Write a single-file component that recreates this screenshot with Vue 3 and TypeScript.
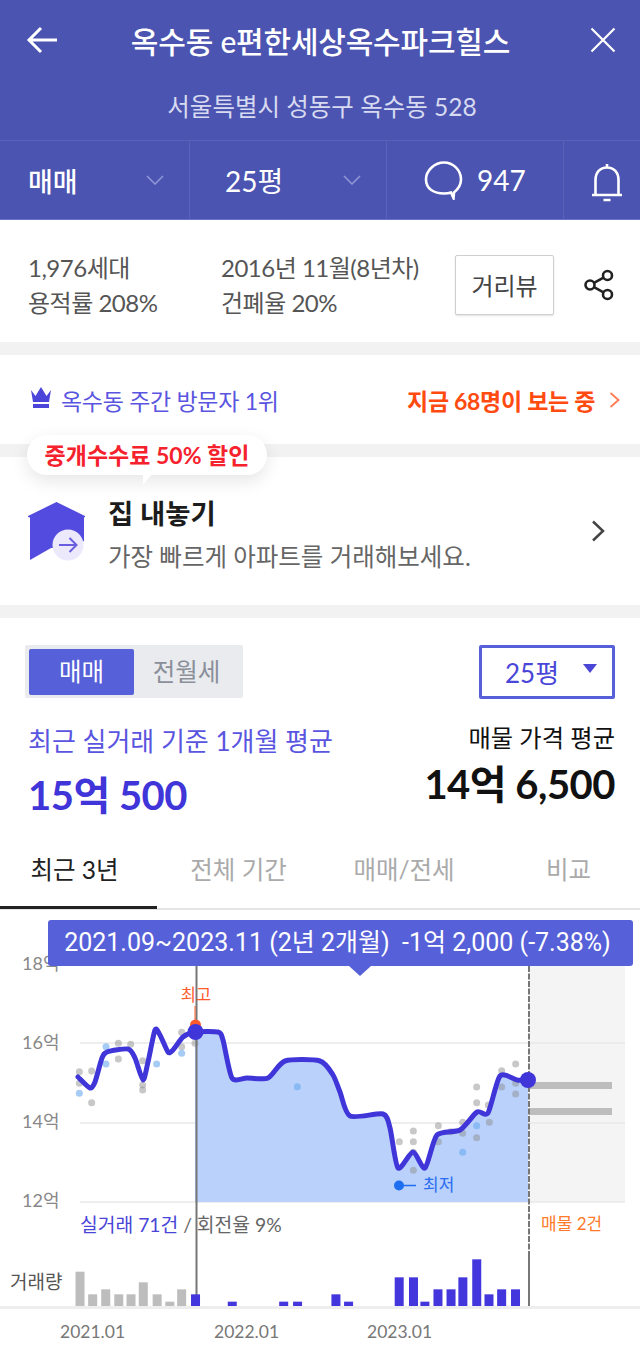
<template>
  <div class="page">
    <header class="head">
      <div class="title-row">
        <svg class="back" width="32" height="28" viewBox="0 0 32 28"><path d="M31 14H3M15 2 3 14l12 12" /></svg>
        <h1 class="title">옥수동 e편한세상옥수파크힐스</h1>
        <svg class="close" width="26" height="26" viewBox="0 0 26 26"><path d="M1.5 1.5l23 23M24.5 1.5l-23 23" /></svg>
      </div>
      <p class="addr">서울특별시 성동구 옥수동 528</p>
      <div class="filters">
        <div class="filter f-deal">
          <span>매매</span>
          <svg width="18" height="10" viewBox="0 0 18 10"><path d="M1 1l8 8 8-8" /></svg>
        </div>
        <div class="filter f-size">
          <span>25평</span>
          <svg width="18" height="10" viewBox="0 0 18 10"><path d="M1 1l8 8 8-8" /></svg>
        </div>
        <div class="filter f-talk">
          <svg width="40" height="40" viewBox="0 0 40 40" class="bubble">
            <path d="M30 32.5c4-3.300 7-7.500 7-13C37 10 29 2.500 20 2.500S2 10 2 19.500 10 33.500 20 33.500c3 0 5-.3 7-1l2.500 5.500z" />
          </svg>
          <span>947</span>
        </div>
        <div class="filter f-bell">
          <svg width="34" height="40" viewBox="0 0 34 40" class="bell">
            <path d="M2 33h30M5.500 33V18C5.500 10.500 10 5.500 17 5.500S28.500 10.500 28.500 18V33M17 2v3M13.500 38h7" />
          </svg>
        </div>
      </div>
    </header>

    <section class="info">
      <div class="info-col c1">
        <div>1,976세대</div>
        <div>용적률 208%</div>
      </div>
      <div class="info-col c2">
        <div>2016년 11월(8년차)</div>
        <div>건폐율 20%</div>
      </div>
      <button class="road">거리뷰</button>
      <svg class="share" width="30" height="32" viewBox="0 0 30 32">
        <circle cx="23.500" cy="6.500" r="4.500" />
        <circle cx="6" cy="16" r="4.500" />
        <circle cx="23.500" cy="25.500" r="4.500" />
        <path d="M10 13.800l9.500-5.200M10 18.200l9.500 5.200" />
      </svg>
    </section>

    <section class="rank band">
      <div class="rank-l">
        <svg class="crown" width="22" height="21" viewBox="0 0 22 21"><path d="M1 3l4.500 6L11 0l5.500 9L21 3l-2 12H3zM3 17h16v4H3z" /></svg>
        <span>옥수동 주간 방문자 1위</span>
      </div>
      <div class="rank-r">
        <span>지금 68명이 보는 중</span>
        <svg width="11" height="16" viewBox="0 0 11 16"><path d="M1.500 1l8 7-8 7" /></svg>
      </div>
    </section>

    <section class="sell band">
      <div class="badge">중개수수료 50% 할인</div>
      <svg class="house" width="58" height="60" viewBox="0 0 58 60">
        <path class="house-body" d="M28.500 1 0 15v1l2 .5V59L23 47h10l23-7V16.500l1-.5v-1z" />
        <circle class="house-disc" cx="40" cy="44" r="15.500" />
        <path class="house-arrow" d="M31 44h17M41.500 37l7 7-7 7" />
      </svg>
      <div class="sell-text">
        <strong>집 내놓기</strong>
        <span>가장 빠르게 아파트를 거래해보세요.</span>
      </div>
      <svg class="sell-arrow" width="14" height="22" viewBox="0 0 14 22"><path d="M2 1.500l10 9.500-10 9.500" /></svg>
    </section>

    <section class="price band">
      <div class="controls">
        <div class="toggle">
          <span class="on">매매</span>
          <span class="off">전월세</span>
        </div>
        <div class="select">
          <span>25평</span>
          <i class="tri"></i>
        </div>
      </div>
      <div class="summary">
        <div class="sum-l">
          <div class="cap">최근 실거래 기준 1개월 평균</div>
          <div class="amount">15억 500</div>
        </div>
        <div class="sum-r">
          <div class="cap">매물 가격 평균</div>
          <div class="amount">14억 6,500</div>
        </div>
      </div>
      <nav class="tabs">
        <span v-for="(t, i) in tabs" :key="t" class="tab" :class="{ active: i === 0 }">{{ t }}</span>
      </nav>
    </section>

    <section class="chart">
      <div class="tip">
        <span>2021.09~2023.11 (2년 2개월)&nbsp;&nbsp;-1억 2,000 (-7.38%)</span>
        <i class="tip-arrow"></i>
      </div>
      <svg width="640" height="437" viewBox="0 910 640 437">
        <rect x="529" y="966" width="96" height="236" fill="#f4f4f4" />
        <line v-for="y in gridYs" :key="y" x1="80" x2="625" :y1="y" :y2="y" class="grid" />
        <text v-for="l in yLabels" :key="l.t" x="22" :y="l.y" class="ylabel">{{ l.t }}</text>
        <path :d="areaPath" fill="#b9d1fb" />
        <circle v-for="(d, i) in greyDots" :key="'g' + i" :cx="d[0]" :cy="d[1]" r="3.500" fill="#8c8c8c" opacity=".48" />
        <circle v-for="(d, i) in blueDots" :key="'b' + i" :cx="d[0]" :cy="d[1]" r="3.500" fill="#6aaaf0" opacity=".6" />
        <rect x="529" y="1082" width="83" height="7" fill="#bdbdbd" />
        <rect x="529" y="1108" width="83" height="7" fill="#bdbdbd" />

        <line x1="196.500" x2="196.500" y1="966" y2="1307" class="vline" />
        <line x1="529" x2="529" y1="966" y2="1252" class="vline" stroke-dasharray="6 1.500" />
        <line x1="529" x2="529" y1="1252" y2="1307" class="vline" />

        <text x="196" y="1001" class="mark-hi" text-anchor="middle">최고</text>
        <line x1="195" x2="195" y1="1006" y2="1024" stroke="#ff5a2a" />
        <circle cx="195.500" cy="1025" r="5.500" fill="#ff5a2a" />
        <path :d="linePath" class="price-line" />
        <circle cx="195.500" cy="1032" r="8" fill="#3f35d8" />
        <circle cx="528" cy="1080" r="8" fill="#3f35d8" />

        <circle cx="399" cy="1185.500" r="5" fill="#1f6ff0" />
        <line x1="399" x2="416" y1="1185.500" y2="1185.500" stroke="#1f6ff0" stroke-width="1.500" />
        <text x="423" y="1191" class="mark-lo">최저</text>

        <text x="80" y="1232" class="deal"><tspan fill="#4a45d8">실거래 71건</tspan> / 회전율 9%</text>
        <text x="541" y="1230" class="listing">매물 2건</text>
        <text x="10" y="1289" class="vol">거래량</text>

        <rect v-for="(b, i) in bars" :key="i" :x="b.x" :y="b.y" width="9" :height="1307 - b.y" :fill="b.grey ? '#bdbdbd' : '#4336dc'" />
        <rect x="0" y="1306" width="640" height="3" fill="#eeeeee" />
        <text v-for="a in axis" :key="a.t" :x="a.x" y="1338" class="axis">{{ a.t }}</text>
      </svg>
    </section>
  </div>
</template>

<script setup lang="ts">
type Pt = [number, number]

const tabs = ['최근 3년', '전체 기간', '매매/전세', '비교']
const gridYs = [1043, 1123, 1202]
const yLabels = [
  { t: '18억', y: 970 },
  { t: '16억', y: 1049 },
  { t: '14억', y: 1128 },
  { t: '12억', y: 1207 },
]
const axis = [
  { t: '2021.01', x: 60 },
  { t: '2022.01', x: 214 },
  { t: '2023.01', x: 367 },
]

const line: Pt[] = [
  [78, 1077], [90, 1088], [95, 1082], [102, 1058], [107, 1052], [128, 1049], [135, 1058],
  [143, 1080], [148, 1062], [155, 1030], [160, 1035], [168, 1052], [173, 1050], [183, 1037],
  [195, 1032], [218, 1032], [223, 1040], [232, 1078], [247, 1078], [268, 1078], [285, 1061],
  [320, 1061], [333, 1075], [340, 1092], [350, 1116], [383, 1114], [390, 1128], [398, 1168],
  [413, 1152], [425, 1168], [437, 1135], [460, 1130], [477, 1112], [488, 1113], [500, 1076],
  [517, 1080], [528, 1080],
]

function smooth(pts: Pt[]): string {
  let d = `M${pts[0][0]} ${pts[0][1]}`
  for (let i = 0; i < pts.length - 1; i++) {
    const p0 = pts[Math.max(i - 1, 0)]
    const p1 = pts[i]
    const p2 = pts[i + 1]
    const p3 = pts[Math.min(i + 2, pts.length - 1)]
    const k = 0.12
    d += `C${p1[0] + (p2[0] - p0[0]) * k} ${p1[1] + (p2[1] - p0[1]) * k} ${p2[0] - (p3[0] - p1[0]) * k} ${p2[1] - (p3[1] - p1[1]) * k} ${p2[0]} ${p2[1]}`
  }
  return d
}

const linePath = smooth(line)
const areaPath = `${smooth(line.slice(14))}V1202H195Z`

const z4 = (x: number, y: number): Pt => [x / 3, 915 + y / 3]
const z5 = (x: number, y: number): Pt => [320 + x / 3, 915 + y / 3]

const greyDots: Pt[] = [
  z4(238, 470), z4(238, 505), z4(275, 468), z4(275, 563), z4(355, 385), z4(392, 388), z4(355, 432),
  z4(428, 437), z4(428, 510), z4(428, 525), z4(545, 352), z4(545, 395), z4(585, 385),
  z5(238, 680), z5(280, 648), z5(280, 680), z5(280, 712), z5(280, 766), z5(355, 632), z5(355, 680),
  z5(392, 650), z5(428, 622), z5(428, 655), z5(470, 516), z5(470, 563), z5(505, 570), z5(545, 467),
  z5(545, 516), z5(587, 447), z5(587, 505), z5(587, 537), z5(508, 622), z5(470, 668),
]
const blueDots: Pt[] = [
  z4(238, 535), z4(318, 395), z4(318, 447), z4(470, 447), z4(545, 415), z4(892, 515),
  z5(428, 712), z5(470, 632),
]

const barData: [number, number, boolean][] = [
  [185, 215, true], [216, 283, true], [248, 268, true], [280, 283, true], [310, 283, true],
  [340, 247, true], [374, 283, true], [405, 305, true], [434, 268, true],
  [468, 283, false], [558, 305, false], [684, 305, false], [718, 305, false], [812, 283, false],
  [843, 305, false], [967, 232, false], [1002, 232, false], [1030, 305, false], [1062, 268, false],
  [1094, 268, false], [1123, 232, false], [1157, 178, false], [1187, 283, false], [1218, 268, false],
  [1252, 268, false],
]
const bars = barData.map(([x, y, grey]) => ({ x: x / 2.45, y: 1200 + y / 3, grey }))
</script>

<style>
body {
  margin: 0;
  background: #fff;
}
</style>

<style scoped>
.page {
  width: 640px;
  height: 1347px;
  overflow: hidden;
  background: #fff;
  color: #555;
  font-family: Lato, "Noto Sans CJK KR", sans-serif;
}

.band {
  border-top: 13px solid #f2f2f2;
}

.head {
  height: 220px;
  background: #4b54b0;
  color: #fff;
}

.title-row {
  display: flex;
  align-items: center;
  justify-content: space-between;
  height: 80px;
  padding: 0 24px 0 26px;
}

.back path,
.close path {
  fill: none;
  stroke: #fff;
}

.back path {
  stroke-width: 3;
}

.close path {
  stroke-width: 2.2;
}

.title {
  margin: 0 7px 0 0;
  font-size: 30px;
  font-weight: 500;
  letter-spacing: -0.2px;
  white-space: nowrap;
}

.addr {
  margin: 0;
  height: 60px;
  padding-left: 4px;
  line-height: 54px;
  text-align: center;
  font-size: 24.500px;
  color: #d7daf0;
}

.filters {
  display: flex;
  height: 80px;
  border-top: 1px solid #5a63b9;
  box-sizing: border-box;
  border-bottom: 1px solid #6a72c4;
}

.filter {
  display: flex;
  align-items: center;
  box-sizing: border-box;
  border-right: 1px solid #5a63b9;
  font-size: 27px;
  font-weight: 500;
}

.filter svg path {
  fill: none;
  stroke: #8f96d8;
  stroke-width: 1.600;
}

.f-deal {
  width: 190px;
  padding: 0 25px 0 28px;
  justify-content: space-between;
}

.f-size {
  width: 197px;
  padding: 0 25px 0 35px;
  justify-content: space-between;
  font-size: 28px;
  font-weight: 400;
}

.f-talk {
  width: 177px;
  padding-left: 37px;
  gap: 13px;
  font-size: 28px;
  font-weight: 400;
}

.f-bell {
  flex: 1;
  border-right: 0;
  padding: 3px 0 0 26px;
}

.filter svg.bubble path,
.filter svg.bell path {
  stroke: #fff;
  stroke-width: 2.600;
}

.info {
  display: flex;
  align-items: center;
  height: 122px;
  padding: 8px 0 0 28px;
  box-sizing: border-box;
  font-size: 24px;
  line-height: 35px;
  letter-spacing: -0.5px;
}

.c1 {
  width: 193px;
}

.c2 {
  width: 234px;
  white-space: nowrap;
}

.road {
  width: 99px;
  height: 60px;
  padding: 0;
  background: #fff;
  border: 1px solid #cfcfcf;
  border-radius: 2px;
  box-shadow: 0 1px 2px rgba(0, 0, 0, 0.12);
  color: #444;
  font: inherit;
}

.share {
  margin-left: 30px;
}

.share circle,
.share path {
  fill: none;
  stroke: #222;
  stroke-width: 2.600;
}

.rank {
  display: flex;
  align-items: center;
  justify-content: space-between;
  height: 102px;
  box-sizing: border-box;
  padding: 0 20px 0 30px;
  font-size: 23px;
  letter-spacing: -0.3px;
}

.rank-l {
  display: flex;
  align-items: center;
  gap: 9px;
  color: #5a55e0;
}

.crown {
  margin-top: -4px;
  fill: #4c45da;
}

.rank-r {
  display: flex;
  align-items: center;
  gap: 14px;
  color: #ff4a10;
  font-weight: 700;
}

.rank-r svg path {
  fill: none;
  stroke: #ff7a50;
  stroke-width: 1.800;
}

.sell {
  position: relative;
  display: flex;
  align-items: center;
  height: 161px;
  padding: 0 35px 0 28px;
  box-sizing: border-box;
}

.badge {
  position: absolute;
  left: 27px;
  top: -22px;
  width: 240px;
  height: 40px;
  border-radius: 20px;
  background: #fff;
  box-shadow: 0 6px 18px rgba(0, 0, 0, 0.1);
  color: #f5222d;
  font-size: 23px;
  font-weight: 700;
  line-height: 40px;
  text-align: center;
}

.badge::after {
  content: "";
  position: absolute;
  left: 116px;
  top: 38px;
  border-top: 12px solid #fff;
  border-right: 10px solid transparent;
}

.house {
  flex: none;
}

.house-body {
  fill: #534be0;
}

.house-disc {
  fill: #ebe9fb;
}

.house-arrow {
  fill: none;
  stroke: #6a5ee0;
  stroke-width: 2;
}

.sell-text {
  display: flex;
  flex: 1;
  flex-direction: column;
  gap: 6px;
  margin: 7px 0 0 22px;
}

.sell-text strong {
  color: #1c1c1c;
  font-size: 27.500px;
  font-weight: 700;
  line-height: 38px;
}

.sell-text span {
  color: #666;
  font-size: 24.500px;
  line-height: 36px;
}

.sell-arrow path {
  fill: none;
  stroke: #444;
  stroke-width: 2.500;
}

.price {
  padding-top: 27px;
}

.controls {
  display: flex;
  justify-content: space-between;
  padding: 0 25px;
}

.toggle {
  display: flex;
  width: 218px;
  height: 53px;
  padding: 4px;
  box-sizing: border-box;
  background: #e9ebee;
  border-radius: 2px;
  font-size: 24.500px;
  line-height: 46px;
  text-align: center;
}

.toggle .on {
  width: 105px;
  height: 46px;
  border-radius: 2px;
  background: #5660d8;
  color: #fff;
}

.toggle .off {
  flex: 1;
  color: #8a8f9a;
}

.select {
  position: relative;
  width: 136px;
  height: 54px;
  box-sizing: border-box;
  padding-left: 23px;
  border: 3px solid #5660d8;
  border-radius: 2px;
  color: #4a46d8;
  font-size: 26px;
  line-height: 50px;
}

.tri {
  position: absolute;
  right: 15px;
  top: 16px;
  border-top: 9px solid #4a46d8;
  border-right: 7.500px solid transparent;
  border-left: 7.500px solid transparent;
}

.summary {
  display: flex;
  justify-content: space-between;
  height: 146px;
  padding: 0 25px 0 28px;
}

.sum-l .cap {
  margin-top: 24px;
  color: #5a55e0;
  font-size: 26px;
  line-height: 36px;
}

.sum-l .amount {
  margin-top: 8px;
  color: #3f35d8;
  font-size: 40px;
  font-weight: 700;
  line-height: 56px;
  letter-spacing: -0.5px;
}

.sum-r {
  text-align: right;
}

.sum-r .cap {
  margin-top: 22px;
  color: #111;
  font-size: 24.300px;
  line-height: 34px;
}

.sum-r .amount {
  margin-top: 1px;
  color: #111;
  font-size: 40px;
  font-weight: 700;
  line-height: 56px;
  letter-spacing: -0.5px;
}

.tabs {
  display: flex;
  height: 65px;
  box-sizing: border-box;
  border-bottom: 2px solid #e5e5e5;
}

.tab {
  position: relative;
  flex: none;
  box-sizing: border-box;
  color: #aaa;
  font-size: 24.500px;
  line-height: 50px;
  text-align: center;
}

.tab:nth-child(1) {
  width: 157px;
  padding-right: 8px;
}

.tab:nth-child(2) {
  width: 163px;
}

.tab:nth-child(3) {
  width: 168px;
}

.tab:nth-child(4) {
  width: 152px;
  padding-left: 9px;
}

.tab.active {
  color: #222;
}

.tab.active::after {
  content: "";
  position: absolute;
  left: 0;
  right: 0;
  bottom: -1px;
  height: 3px;
  background: #222;
}

.chart {
  position: relative;
  height: 437px;
}

.chart svg {
  display: block;
}

.chart text {
  font-family: Lato, "Noto Sans CJK KR", sans-serif;
}

.tip {
  position: absolute;
  left: 48px;
  top: 10px;
  width: 585px;
  height: 46px;
  box-sizing: border-box;
  padding-right: 6px;
  border-radius: 3px;
  background: #5660d8;
  color: #fff;
  font-family: Roboto, "Noto Sans CJK KR", sans-serif;
  font-size: 25px;
  line-height: 46px;
  text-align: center;
  white-space: nowrap;
}

.tip-arrow {
  position: absolute;
  left: 301px;
  top: 46px;
  border-top: 10px solid #5660d8;
  border-right: 11px solid transparent;
  border-left: 11px solid transparent;
}

.grid {
  stroke: #e8e8e8;
  stroke-width: 1.500;
}

.ylabel {
  fill: #888;
  font-size: 18px;
}

.vline {
  stroke: #777;
  stroke-width: 2;
}

.price-line {
  fill: none;
  stroke: #3f35d8;
  stroke-width: 5;
  stroke-linejoin: round;
  stroke-linecap: round;
}

.mark-hi {
  fill: #ff5a2a;
  font-size: 16.500px;
}

.mark-lo {
  fill: #2b6cf0;
  font-size: 17px;
}

.deal {
  fill: #666;
  font-size: 19.300px;
}

.listing {
  fill: #ff7a2a;
  font-size: 17px;
}

.vol {
  fill: #555;
  font-size: 19px;
}

.axis {
  fill: #777;
  font-size: 17.500px;
}
</style>
